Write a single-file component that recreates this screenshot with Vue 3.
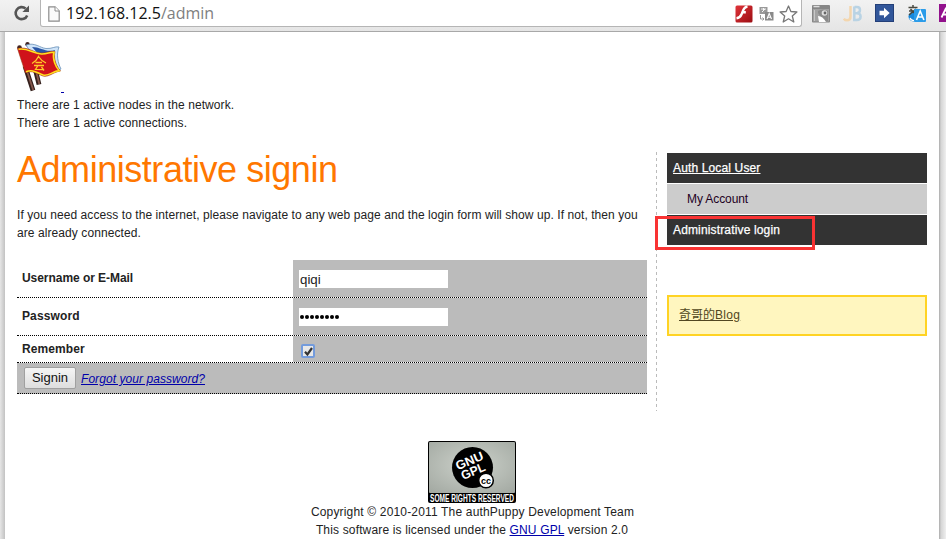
<script setup>
import { ref } from 'vue'

const username = ref('qiqi')
const remember = ref(true)
</script>

<template>
  <div class="browser">
    <header class="toolbar">
      <svg class="reload" width="18" height="18" viewBox="0 0 18 18">
        <path d="M14.2 11.4A6 6 0 1 1 12.600 4.600" fill="none" stroke="#555" stroke-width="2.600" />
        <path d="M16 1.400V8H9.400z" fill="#555" />
      </svg>
      <div class="omnibox">
        <svg class="page-icon" width="12" height="16" viewBox="0 0 12 16">
          <path d="M.8.8H7L11.2 5V15.2H.8z" fill="#fafafa" stroke="#8c8c8c" stroke-width="1.2" />
          <path d="M7 .8V5h4.2" fill="#fff" stroke="#8c8c8c" />
        </svg>
        <span class="url">192.168.12.5<i>/admin</i></span>
        <div class="omni-icons">
          <svg width="18" height="18" viewBox="0 0 18 18">
            <defs>
              <linearGradient id="flash" x1="0" y1="0" x2="1" y2="1">
                <stop offset="0" stop-color="#e0343a" /><stop offset="1" stop-color="#9b0d12" />
              </linearGradient>
            </defs>
            <rect x=".5" y=".5" width="17" height="17" rx="1.5" fill="url(#flash)" />
            <path d="M12.500 1.500C8.500 2 8 6 6.700 9 5.500 12 4.300 13 1.500 13.300M7.200 7.300H10.800" fill="none" stroke="#fff" stroke-width="2.400" />
          </svg>
          <svg width="15" height="14" viewBox="0 0 15 14">
            <path d="M.5 0h8v5H6v2H.5z" fill="#999" />
            <path d="M2 2h5M4.500 1v2M3 5l3-3" stroke="#fff" stroke-width=".9" />
            <path d="M1.500 8v4h3M3.500 10.500l1.500 1.500-1.500 1.500" fill="none" stroke="#999" />
            <rect x="6" y="5" width="8.500" height="8.500" fill="#8a8a8a" />
            <path d="M8 12l2.200-5.500L12.500 12M8.700 10.200h3" fill="none" stroke="#fff" stroke-width="1.100" />
          </svg>
          <svg width="19" height="18" viewBox="0 0 19 18">
            <path d="M9.500 1l2.400 5.500 6 .5-4.600 4 1.500 6-5.300-3.200-5.300 3.200 1.500-6L1.100 7l6-.5z" fill="#fff" stroke="#777" stroke-width="1.300" stroke-linejoin="round" />
          </svg>
        </div>
      </div>
      <div class="extensions">
        <svg class="ext-bird" width="20" height="19" viewBox="0 0 20 19">
          <rect x="1" y="1" width="18" height="17.500" rx="1" fill="#858585" />
          <rect x="2.500" y="1.800" width="6" height="1.500" fill="#ddd" />
          <rect x="2" y="5" width="16" height="12.500" fill="#a2a2a2" />
          <path d="M3.500 6v11" stroke="#c8c8c8" />
          <path d="M7 7Q12 4 17 7V17H11Q10 12 7 9z" fill="#8b8b8b" />
          <path d="M7 12c3 0 6 2 8 6H8z" fill="#fff" />
          <circle cx="13.500" cy="9" r="2.800" fill="#e0e0e0" /><circle cx="14" cy="9" r="1.400" fill="#666" />
        </svg>
        <svg class="ext-jb" width="19" height="17" viewBox="0 0 19 17">
          <path d="M7.500 1v10.500Q7.500 15.300 4 15.300 2 15.300 .8 13.700" fill="none" stroke="#f3d6ae" stroke-width="2.500" />
          <path d="M11.300 1.500v13.500h2.500Q17.600 15 17.600 11.500 17.600 8.200 14 8.200H11.500M11.500 2H14Q17 2 17 5 17 8 14 8" fill="none" stroke="#b9d3e4" stroke-width="2.500" />
        </svg>
        <svg class="ext-arrow" width="19" height="18" viewBox="0 0 19 18">
          <rect x=".5" y=".5" width="18" height="17" fill="#31569a" stroke="#233f78" />
          <path d="M4.500 6.700H9V3.700L14.700 9 9 14.300V11.300H4.500z" fill="#fff" />
        </svg>
        <svg class="ext-translate" width="20" height="19" viewBox="0 0 20 19">
          <circle cx="6.500" cy="12.500" r="5" fill="#1788dc" />
          <path d="M1.500 3.500h9M6 1v3M2 7h8M3.500 5l5 5M9 5l-7 6" stroke="#48483f" stroke-width="1.500" />
          <path d="M3 14q1 2.500 4 2.500" fill="none" stroke="#fff" stroke-width="1.200" />
          <rect x="7" y="5" width="12" height="13" rx="1" fill="#2b9ce9" />
          <path d="M9.500 16l3.700-9 3.700 9M10.800 13h4.800" fill="none" stroke="#fff" stroke-width="1.600" />
        </svg>
        <svg class="ext-a" width="7" height="18" viewBox="0 0 7 18">
          <rect width="18" height="18" fill="#92118c" />
          <path d="M2.500 13.500L6.500 5l4 8.500M4 10.500h6" fill="none" stroke="#fff" stroke-width="1.800" />
        </svg>
      </div>
    </header>

    <div class="viewport">
      <div class="page">
        <div class="logo">
          <svg width="46" height="50" viewBox="0 0 46 50">
            <path d="M8 24L16 48.500M17 22L22 42.500" stroke="#34201c" stroke-width="4.800" />
            <path d="M10 29L16.200 48M19 29L22.300 42" stroke="#85564b" stroke-width="1.800" />
            <circle cx="2.500" cy="5.500" r="2.300" fill="#402321" /><circle cx="10.500" cy="2.200" r="2.200" fill="#402321" />
            <path d="M9 3C18 0 23 6 29 6.500 35 7 38 4 42 5 39 13 41 21 44 27L38 30 20 20z" fill="#cfe4f8" stroke="#668eb7" stroke-width=".8" />
            <path d="M15 5C24 5 29 11 38 8 36 15 38 22 41 26L34 26z" fill="#2754a5" />
            <path d="M.5 6.500C11 4 17 11.500 25 11 31 11 33 8.500 38 9.500 36 17 40 25 43.500 29 36 30 32 35.500 26 34 20 32 16 27.500 8.500 31 6 23 3 15 .5 6.500z" fill="#d0121a" stroke="#9c3a10" stroke-width=".6" />
            <path d="M1.500 7.300C11 5.500 17 12.500 25 12 30.500 12 33 9.800 37 10.300 35 17.500 39 25 42 28.600 35.500 29.300 32 34.500 26.300 33 20 31 16 26.800 9 29.800" fill="none" stroke="#ffe11e" stroke-width="1.600" />
            <path d="M15 21.500Q19.500 19 21.500 14.500 24 18.500 29 21M18.500 20.500h6.500M17 23.500h10M21 23.500l-2.500 3.800 7.500.4M24.500 25l2.500 3.500" fill="none" stroke="#ffc928" stroke-width="1.300" />
          </svg>
          <a class="logo-link">&nbsp;</a>
        </div>
        <p class="stat nodes">There are 1 active nodes in the network.</p>
        <p class="stat conns">There are 1 active connections.</p>

        <div class="columns">
          <main class="main">
            <h1>Administrative signin</h1>
            <div class="intro">
              <div class="intro-a">If you need access to the internet, please navigate to any web page and the login form will show up. If not, then you</div>
              <div class="intro-b">are already connected.</div>
            </div>
            <form class="form" @submit.prevent>
              <div class="row tall">
                <label for="user"><span class="l-user">Username or E-Mail</span></label>
                <div class="cell"><input id="user" v-model="username" class="field" type="text" spellcheck="false"></div>
              </div>
              <div class="row tall">
                <label><span class="l-pass">Password</span></label>
                <div class="cell"><div class="field dots"><b v-for="n in 8" :key="n"></b></div></div>
              </div>
              <div class="row short">
                <label><span class="l-rem">Remember</span></label>
                <div class="cell">
                  <span class="check" role="checkbox" :aria-checked="remember" @click="remember = !remember">
                    <svg v-if="remember" width="11" height="11" viewBox="0 0 11 11"><path d="M2 5.800L4.400 8.400 9 2" fill="none" stroke="#333" stroke-width="2.200" /></svg>
                  </span>
                </div>
              </div>
              <div class="actions">
                <button type="submit">Signin</button>
                <a class="forgot">Forgot your password?</a>
              </div>
            </form>
          </main>
          <aside class="side">
            <nav>
              <div class="item dark"><a class="underlined">Auth Local User</a></div>
              <div class="item light"><a>My Account</a></div>
              <div class="item dark"><a class="admin">Administrative login</a><span class="marker"></span></div>
            </nav>
            <div class="note"><a>奇哥的<span>Blog</span></a></div>
          </aside>
        </div>

        <footer>
          <svg class="gpl" width="88" height="62" viewBox="0 0 88 62">
            <defs>
              <radialGradient id="plate" cx=".5" cy=".45" r=".7">
                <stop offset="0" stop-color="#cdd2cb" /><stop offset="1" stop-color="#a4aaa3" />
              </radialGradient>
            </defs>
            <rect width="88" height="62" rx="2" fill="#000" />
            <rect x="1" y="1" width="86" height="51" rx="1" fill="url(#plate)" />
            <circle cx="44.500" cy="26.500" r="20.500" fill="#000" />
            <circle cx="58" cy="39.500" r="7.300" fill="#fff" stroke="#000" stroke-width="1.500" />
            <g transform="rotate(-23 44 26)" fill="#fff" font-family="Liberation Sans, sans-serif" font-weight="bold" font-size="12.500">
              <text x="29.500" y="23.500" textLength="29" lengthAdjust="spacingAndGlyphs">GNU</text>
              <text x="31" y="34.500" textLength="25" lengthAdjust="spacingAndGlyphs">GPL</text>
            </g>
            <text x="53" y="42.500" font-family="Liberation Sans, sans-serif" font-weight="bold" font-size="9" textLength="10" lengthAdjust="spacingAndGlyphs">cc</text>
            <text x="2" y="60.500" fill="#fff" font-family="Liberation Sans, sans-serif" font-weight="bold" font-size="10.500" textLength="84" lengthAdjust="spacingAndGlyphs">SOME RIGHTS RESERVED</text>
          </svg>
          <div class="copy">Copyright © 2010-2011 The authPuppy Development Team</div>
          <div class="lic">This software is licensed under the <a>GNU GPL</a> version 2.0</div>
        </footer>
      </div>
    </div>
  </div>
</template>

<style>
body { margin: 0; background: #fff; }
</style>

<style scoped>
* { box-sizing: border-box; }
.browser { width: 946px; height: 553px; overflow: hidden; background: #fff; font: 12px/18px "Liberation Sans", Arial, sans-serif; color: #222; }
.toolbar { display: flex; height: 32px; background: linear-gradient(#f2f2f2, #e5e5e5); border-bottom: 1px solid #a8a8a8; }
.reload { margin: 4px 0 0 13px; flex: none; }
.omnibox { display: flex; width: 762px; height: 27px; margin-left: 9px; background: #fff; border: 1px solid #b5b5b5; border-top: 0; border-radius: 0 0 3px 3px; flex: none; }
.page-icon { margin: 6px 0 0 7px; flex: none; }
.url { margin-left: 6px; font: 16px/26px "Open Sans", "Noto Sans", sans-serif; color: #111; white-space: nowrap; }
.url i { font-style: normal; color: #808080; }
.omni-icons { display: flex; margin: 5px 3px 0 auto; align-items: flex-start; }
.omni-icons svg:nth-child(2) { margin: 2px 5px 0 6px; }
.extensions { display: flex; padding-top: 4px; flex: none; }
.ext-bird { margin-left: 9px; }
.ext-jb { margin: 1px 0 0 12px; }
.ext-arrow { margin-left: 13px; }
.ext-translate { margin-left: 13px; }
.ext-a { margin-left: 12px; }
.viewport { height: 507px; padding: 0 7px 0 5px; background: linear-gradient(90deg, #e6e6e6, #c2c2c2 5px, #fff 5px, #fff 939px, #aaa 939px, #d5d5d5 941px, #efefef 946px); }
.page { height: 507px; padding: 10px 12px 0; background: #fff; overflow: hidden; }
.logo { display: flex; align-items: flex-end; height: 54px; }
.logo svg { margin-bottom: 4px; }
.logo-link { width: 3px; height: 4px; margin-left: -2px; border-top: 1px solid #00a; overflow: hidden; }
p { margin: 0; white-space: nowrap; }
.stat { height: 18px; }
.nodes { letter-spacing: .075px; }
.conns { letter-spacing: .085px; }
.columns { display: flex; margin-top: 20px; height: 259px; }
.main { width: 630px; flex: none; }
h1 { margin: 0; font-size: 36px; line-height: 36px; font-weight: normal; letter-spacing: -.46px; color: #f70; white-space: nowrap; }
.intro { margin-top: 18px; height: 54px; white-space: nowrap; }
.intro-a { letter-spacing: .072px; }
.intro-b { letter-spacing: .08px; }
.form { color: #222; }
.row { display: flex; border-bottom: 1px dotted #000; }
.tall { height: 38px; }
.short { height: 27px; }
.row label { width: 276px; padding: 9px 5px 0; font-weight: bold; }
.l-user { letter-spacing: -.05px; }
.l-pass { letter-spacing: .12px; }
.l-rem { letter-spacing: .1px; }
.row.short label { padding-top: 4px; }
.cell { flex: 1; background: #bbb; padding: 10px 6px 0; }
.field { display: block; width: 149px; height: 18px; margin: 0; padding: 1px; border: 0; outline: 0; background: #fff; color: #222; font: 13.3px/16px "Liberation Sans", Arial, sans-serif; }
.dots { display: flex; padding: 7px 1px 0; gap: 1px; }
.dots b { width: 4px; height: 4px; border-radius: 50%; background: #000; }
.check { display: flex; align-items: center; justify-content: center; width: 14px; height: 14px; margin: 0 0 0 2px; border: 2px solid #739bdc; border-radius: 2px; background: #e8e8e8; }
.short .cell { padding-top: 8px; }
.check svg { flex: none; }
.actions { display: flex; height: 31px; background: #bbb; border-bottom: 1px dotted #000; padding: 4px 7px; }
button { width: 52px; height: 22px; padding: 0; border: 1px solid #a0a0a0; border-radius: 2px; background: linear-gradient(#f5f5f5, #dedede); font: 13px/20px "Liberation Sans", Arial, sans-serif; color: #111; }
.forgot { margin: 3px 0 0 5px; font-style: italic; letter-spacing: .06px; color: #00a; text-decoration: underline; white-space: nowrap; }
.side { width: 271px; margin-left: 9px; padding: 1px 0 0 11px; background: repeating-linear-gradient(#bbb 0 3px, transparent 3px 6px) 0 0 / 1px 100% no-repeat; }
.item { position: relative; height: 30px; margin-bottom: 1px; padding: 6px 6px 0; white-space: nowrap; }
.dark { background: #333; color: #fff; -webkit-text-stroke: .25px #fff; }
.underlined { letter-spacing: .14px; text-decoration: underline; }
.admin { letter-spacing: .15px; }
.light { background: #ccc; padding-left: 20px; color: #202; letter-spacing: -.1px; }
.marker { position: absolute; left: -12px; top: 1px; width: 160px; height: 34px; border: 3px solid #f93333; }
.note { height: 41px; margin-top: 50px; border: 2px solid #ffd324; background: #fff6bf; padding: 9px 10px; }
.note a { display: block; font: 12px/18px "Liberation Sans", "Noto Sans CJK SC", sans-serif; color: #514721; text-decoration: underline; }
.note span { letter-spacing: .3px; }
footer { text-align: center; margin: 30px 0 0; white-space: nowrap; }
.gpl { display: block; margin: 0 auto; }
.copy { padding-left: 1px; letter-spacing: .17px; }
.lic { letter-spacing: .155px; }
.lic a { color: #00a; text-decoration: underline; }
</style>
